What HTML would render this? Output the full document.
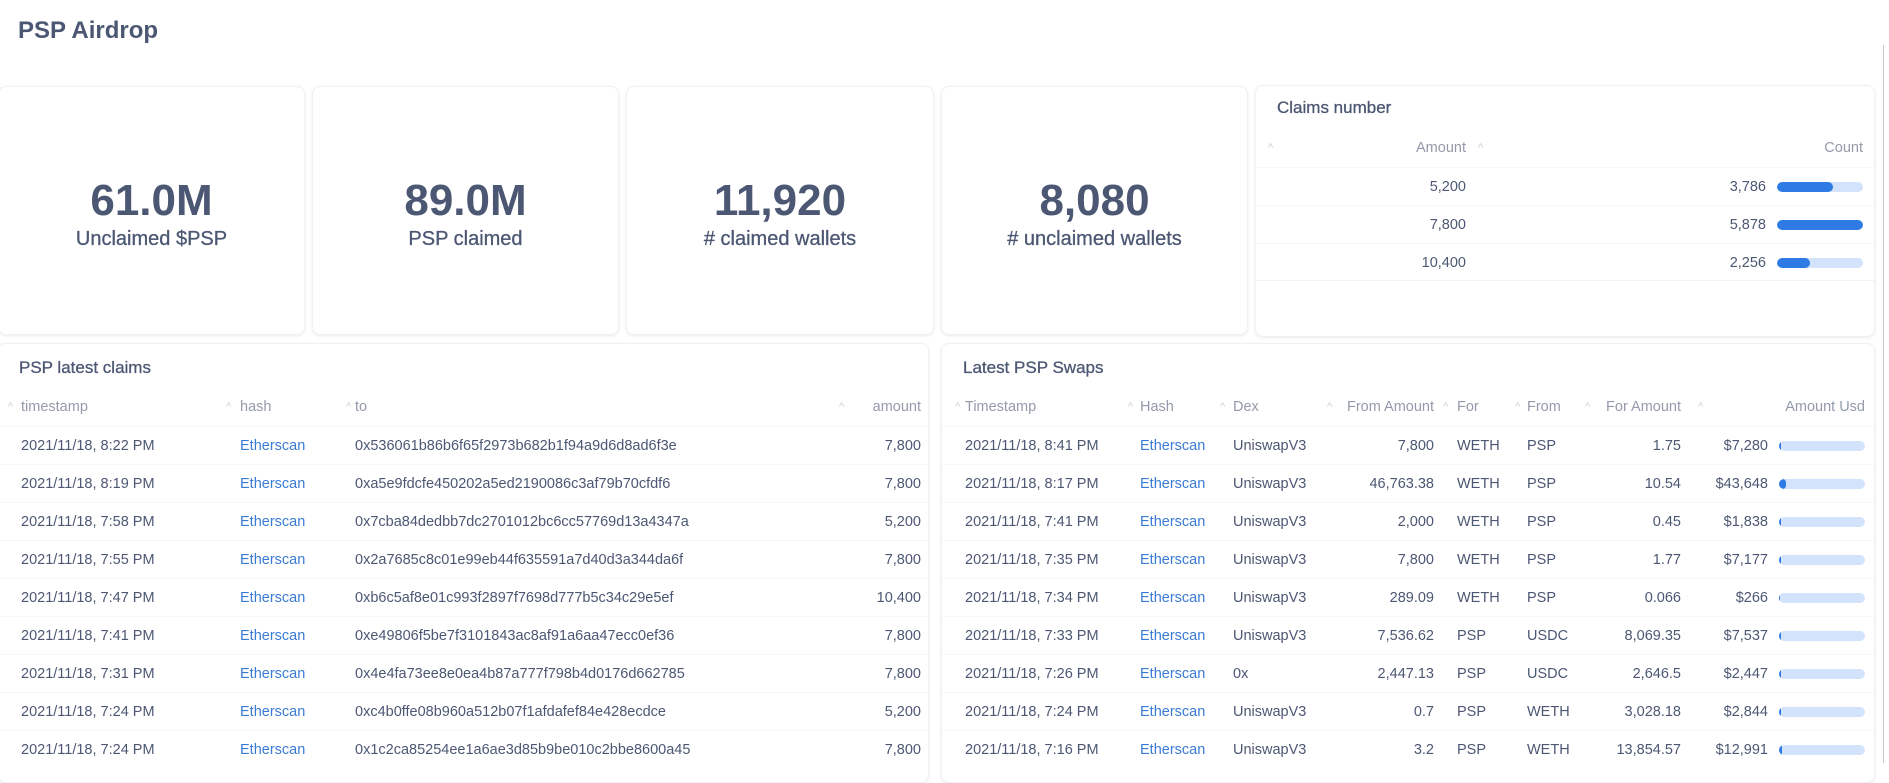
<!DOCTYPE html>
<html><head><meta charset="utf-8">
<style>
*{margin:0;padding:0;box-sizing:border-box}
body{width:1889px;height:763px;overflow:hidden;background:#fff;font-family:"Liberation Sans",sans-serif;color:#4c5773;position:relative}
.a{position:absolute;white-space:nowrap}
.card{position:absolute;background:#fff;border-radius:8px;box-shadow:0 1px 3px rgba(0,0,0,.08);border:1px solid #f0f1f3}
.num{position:absolute;left:0;right:0;text-align:center;font-weight:bold;font-size:44px;color:#4c5773;top:89px;line-height:50px}
.lab{position:absolute;left:0;right:0;text-align:center;font-size:20px;top:140px;line-height:24px;-webkit-text-stroke:0.3px #4c5773}
.row{position:absolute;height:38px;line-height:38px;font-size:14.5px;border-top:1px solid #f6f7f9}
.row span,.hd span{position:absolute;white-space:nowrap}
.hd{position:absolute;height:30px;line-height:30px;font-size:14.5px;color:#949aab}
.lk{color:#3a7bd5}
.c{color:#c9cdd5;font-size:11px}
.bar{position:absolute;height:10px;top:14px;border-radius:5px;background:#d3e3fb;overflow:hidden}
.bar i{position:absolute;left:0;top:0;bottom:0;background:#2f7be5;border-radius:5px}
.t{font-size:17px;color:#4c5773;-webkit-text-stroke:0.3px #4c5773}
</style></head><body>
<div class="a" style="left:18px;top:14px;font-size:24px;font-weight:bold;line-height:34px">PSP Airdrop</div>

<div class="card" style="left:-2px;top:86px;width:307px;height:249px"><div class="num">61.0M</div><div class="lab">Unclaimed $PSP</div></div>
<div class="card" style="left:312px;top:86px;width:307px;height:249px"><div class="num">89.0M</div><div class="lab">PSP claimed</div></div>
<div class="card" style="left:626px;top:86px;width:308px;height:249px"><div class="num">11,920</div><div class="lab"># claimed wallets</div></div>
<div class="card" style="left:941px;top:86px;width:307px;height:249px"><div class="num">8,080</div><div class="lab"># unclaimed wallets</div></div>

<div class="card" style="left:1255px;top:85px;width:620px;height:252px">
 <div class="a t" style="left:21px;top:11px;line-height:22px">Claims number</div>
 <div class="hd" style="left:0;top:47px;width:620px">
  <span class="c" style="left:12px">^</span>
  <span style="right:410px">Amount</span><span class="c" style="left:222px">^</span>
  <span style="right:13px">Count</span>
 </div>
 <div class="row" style="left:0;top:81px;width:620px"><span style="right:410px">5,200</span><span style="right:110px">3,786</span><div class="bar" style="left:521px;width:86px"><i style="width:56px"></i></div></div>
 <div class="row" style="left:0;top:119px;width:620px"><span style="right:410px">7,800</span><span style="right:110px">5,878</span><div class="bar" style="left:521px;width:86px"><i style="width:86px"></i></div></div>
 <div class="row" style="left:0;top:157px;width:620px;border-bottom:1px solid #f1f3f5"><span style="right:410px">10,400</span><span style="right:110px">2,256</span><div class="bar" style="left:521px;width:86px"><i style="width:33px"></i></div></div>
</div>

<div class="card" style="left:-2px;top:343px;width:931px;height:440px">
 <div class="a t" style="left:20px;top:13px;line-height:22px">PSP latest claims</div>
 <div class="hd" style="left:0;top:48px;width:931px">
  <span class="c" style="left:9px">^</span><span style="left:22px">timestamp</span>
  <span class="c" style="left:227px">^</span><span style="left:241px">hash</span>
  <span class="c" style="left:347px">^</span><span style="left:356px">to</span>
  <span class="c" style="left:840px">^</span><span style="right:9px">amount</span>
 </div>
 <div id="L"></div>
</div>

<div class="card" style="left:941px;top:343px;width:934px;height:440px">
 <div class="a t" style="left:21px;top:13px;line-height:22px">Latest PSP Swaps</div>
 <div class="hd" style="left:0;top:48px;width:934px">
  <span class="c" style="left:13px">^</span><span style="left:23px">Timestamp</span>
  <span class="c" style="left:186px">^</span><span style="left:198px">Hash</span>
  <span class="c" style="left:278px">^</span><span style="left:291px">Dex</span>
  <span class="c" style="left:385px">^</span><span style="right:442px">From Amount</span>
  <span class="c" style="left:501px">^</span><span style="left:515px">For</span>
  <span class="c" style="left:573px">^</span><span style="left:585px">From</span>
  <span class="c" style="left:643px">^</span><span style="right:195px">For Amount</span>
  <span class="c" style="left:756px">^</span><span style="right:11px">Amount Usd</span>
 </div>
 <div id="R"></div>
</div>

<div class="a" style="left:1883px;top:45px;width:1px;height:718px;background:#c8c8c8"></div>
<div class="a" style="left:1884px;top:0;width:5px;height:763px;background:#fff"></div>

<script>
var L=[["8:22","0x536061b86b6f65f2973b682b1f94a9d6d8ad6f3e","7,800"],["8:19","0xa5e9fdcfe450202a5ed2190086c3af79b70cfdf6","7,800"],["7:58","0x7cba84dedbb7dc2701012bc6cc57769d13a4347a","5,200"],["7:55","0x2a7685c8c01e99eb44f635591a7d40d3a344da6f","7,800"],["7:47","0xb6c5af8e01c993f2897f7698d777b5c34c29e5ef","10,400"],["7:41","0xe49806f5be7f3101843ac8af91a6aa47ecc0ef36","7,800"],["7:31","0x4e4fa73ee8e0ea4b87a777f798b4d0176d662785","7,800"],["7:24","0xc4b0ffe08b960a512b07f1afdafef84e428ecdce","5,200"],["7:24","0x1c2ca85254ee1a6ae3d85b9be010c2bbe8600a45","7,800"]];
var h="";L.forEach(function(r,i){h+='<div class="row" style="left:0;width:931px;top:'+(82+38*i)+'px"><span style="left:22px">2021/11/18, '+r[0]+' PM</span><span class="lk" style="left:241px">Etherscan</span><span style="left:356px">'+r[1]+'</span><span style="right:9px">'+r[2]+'</span></div>'});
document.getElementById("L").outerHTML=h;
var R=[["8:41","UniswapV3","7,800","WETH","PSP","1.75","$7,280",2],["8:17","UniswapV3","46,763.38","WETH","PSP","10.54","$43,648",7],["7:41","UniswapV3","2,000","WETH","PSP","0.45","$1,838",2],["7:35","UniswapV3","7,800","WETH","PSP","1.77","$7,177",2],["7:34","UniswapV3","289.09","WETH","PSP","0.066","$266",1],["7:33","UniswapV3","7,536.62","PSP","USDC","8,069.35","$7,537",2],["7:26","0x","2,447.13","PSP","USDC","2,646.5","$2,447",2],["7:24","UniswapV3","0.7","PSP","WETH","3,028.18","$2,844",2],["7:16","UniswapV3","3.2","PSP","WETH","13,854.57","$12,991",3]];
h="";R.forEach(function(r,i){h+='<div class="row" style="left:0;width:934px;top:'+(82+38*i)+'px"><span style="left:23px">2021/11/18, '+r[0]+' PM</span><span class="lk" style="left:198px">Etherscan</span><span style="left:291px">'+r[1]+'</span><span style="right:442px">'+r[2]+'</span><span style="left:515px">'+r[3]+'</span><span style="left:585px">'+r[4]+'</span><span style="right:195px">'+r[5]+'</span><span style="right:108px">'+r[6]+'</span><div class="bar" style="left:837px;width:86px"><i style="width:'+r[7]+'px"></i></div></div>'});
document.getElementById("R").outerHTML=h;
</script>
</body></html>
